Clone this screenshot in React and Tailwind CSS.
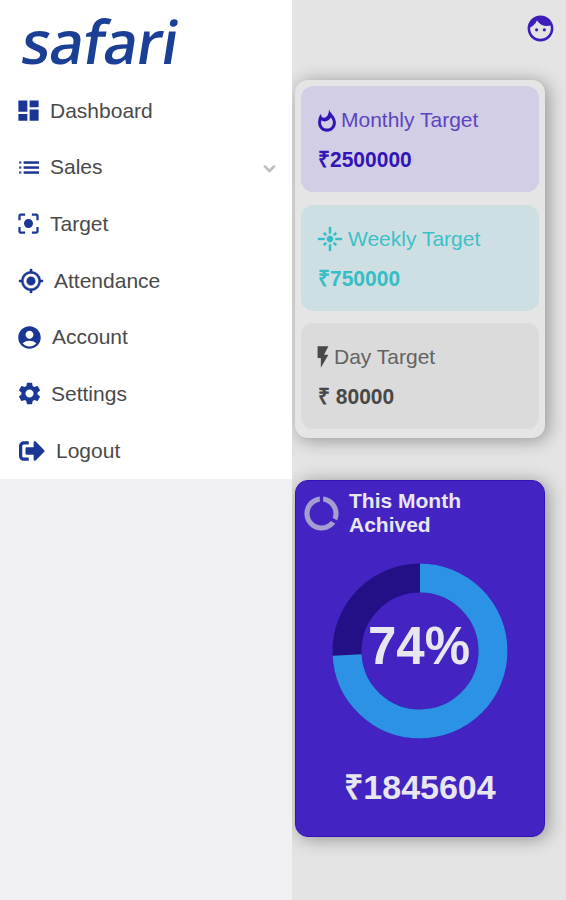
import React from "react";
import {
  MdDashboard,
  MdCenterFocusStrong,
  MdMyLocation,
  MdAccountCircle,
  MdSettings,
  MdFace,
  MdFlare,
  MdFlashOn,
  MdDataUsage,
  MdKeyboardArrowDown,
} from "react-icons/md";
import { FaSignOutAlt } from "react-icons/fa";

function ListIcon({ className }) {
  return (
    <svg viewBox="0 0 20 13" className={className} fill="currentColor">
      <rect x="0" y="0.3" width="2.4" height="2.4" opacity="0.8" />
      <rect x="0" y="5.3" width="2.4" height="2.4" opacity="0.8" />
      <rect x="0" y="10.3" width="2.4" height="2.4" opacity="0.8" />
      <rect x="4.6" y="0.3" width="15.4" height="2.5" />
      <rect x="4.6" y="5.3" width="15.4" height="2.5" />
      <rect x="4.6" y="10.3" width="15.4" height="2.5" />
    </svg>
  );
}

function FlameIcon({ className }) {
  return (
    <svg viewBox="0 0 18 23" className={className}>
      <path
        fill="currentColor"
        fillRule="evenodd"
        d="M11 0.3C11.6 3.8 17.9 7.4 17.9 13.8C17.9 18.8 14 22.7 9 22.7S0.1 18.8 0.1 13.8C0.1 10.6 1 7.2 2.9 4.8C3.1 7.2 3.9 8.8 6 8.8C9.2 8.8 11 5.2 11 0.3ZM12.9 8.6C11.6 11 9.2 12.6 6.4 12.4C5.1 12.3 4.1 11.9 3.4 11.2C3.2 12 3.1 12.8 3.1 13.7C3.1 17.1 5.7 19.6 9 19.6S14.9 17.1 14.9 13.7C14.9 12 14.1 10.1 12.9 8.6Z"
      />
    </svg>
  );
}

const menu = [
  { label: "Dashboard", Icon: MdDashboard, icon: "size-[27px]", cell: "w-[50px] pl-[15px]" },
  { label: "Sales", Icon: ListIcon, icon: "w-[20px] h-[13px]", cell: "w-[50px] pl-[19px]", expandable: true },
  { label: "Target", Icon: MdCenterFocusStrong, icon: "size-[27px]", cell: "w-[50px] pl-[15px]" },
  { label: "Attendance", Icon: MdMyLocation, icon: "size-[26px] stroke-current stroke-[0.4] [&>path[fill=none]]:stroke-none", cell: "w-[54px] pl-[18px]" },
  { label: "Account", Icon: MdAccountCircle, icon: "size-[27px]", cell: "w-[52px] pl-[16px]" },
  { label: "Settings", Icon: MdSettings, icon: "size-[27px]", cell: "w-[51px] pl-[16px]" },
  { label: "Logout", Icon: FaSignOutAlt, icon: "size-[26px]", cell: "w-[56px] pl-[19px]" },
];

const targets = [
  { label: "Monthly Target", amount: "₹2500000", Icon: FlameIcon, icon: "w-[18px] h-[23px] mr-[5px]", box: "bg-[#d2cee6]", title: "text-[#5b45c0]", strong: "text-[#3315b5]" },
  { label: "Weekly Target", amount: "₹750000", Icon: MdFlare, icon: "size-[26px] -ml-px mr-[5px] stroke-current stroke-[0.3] [&>path[fill=none]]:stroke-none", box: "bg-[#cddfe3]", title: "text-[#3dc0c8]", strong: "text-[#36bdc5]" },
  { label: "Day Target", amount: "₹ 80000", Icon: MdFlashOn, icon: "size-[26px] -ml-[8px] -mr-[2px]", box: "bg-[#dbdbdb]", title: "text-[#636363]", strong: "text-[#484848]" },
];

function Sidebar() {
  return (
    <aside className="relative z-10 w-[292px] shrink-0 bg-[#efeff4]">
      <div className="h-[479px] bg-white">
        <div className="flex h-[82px] items-start pl-[19px]">
          <span className="block origin-[0_64px] scale-x-[0.99] -skew-x-[9deg] font-['Open_Sans',sans-serif] text-[60px] leading-[82px] font-semibold tracking-[-1px] text-[#1c3f96]">
            safari
          </span>
        </div>
        <nav className="flex h-[397px] flex-col">
          {menu.map(({ label, Icon, icon, cell, expandable }) => (
            <a key={label} className="flex flex-1 items-center text-[21px] text-[#4a4a4a]">
              <span className={`flex shrink-0 text-[#1b3795] ${cell}`}>
                <Icon className={icon} />
              </span>
              <span>{label}</span>
              {expandable && (
                <MdKeyboardArrowDown className="mt-[3px] mr-[11px] ml-auto size-[23px] stroke-current stroke-1 text-[#c0c0c0] [&>path[fill=none]]:stroke-none" />
              )}
            </a>
          ))}
        </nav>
      </div>
    </aside>
  );
}

function TargetCard({ label, amount, Icon, icon, box, title, strong }) {
  return (
    <div className={`h-[106px] rounded-[12px] pt-[14px] pl-[17px] ${box}`}>
      <div className={`flex h-[40px] items-center text-[21px] ${title}`}>
        <Icon className={`shrink-0 ${icon} ${strong}`} />
        <span>{label}</span>
      </div>
      <div className={`flex h-[40px] scale-y-105 items-center text-[21px] font-bold ${strong}`}>{amount}</div>
    </div>
  );
}

function Donut({ percent }) {
  const length = 2 * Math.PI * 73;
  return (
    <div className="-ml-px grid size-[176px] place-items-center">
      <svg viewBox="0 0 176 176" className="col-start-1 row-start-1 size-[176px] -rotate-90">
        <circle cx="88" cy="88" r="73" fill="none" stroke="#231086" strokeWidth="29" />
        <circle cx="88" cy="88" r="73" fill="none" stroke="#2c92e6" strokeWidth="29" strokeDasharray={`${(length * percent) / 100} ${length}`} />
      </svg>
      <span className="z-10 col-start-1 row-start-1 -mt-[11px] -ml-px scale-y-105 text-[51px] leading-none font-bold">{percent}%</span>
    </div>
  );
}

export default function App() {
  return (
    <div className="flex h-[900px] w-[566px] overflow-hidden bg-[#e4e4e4] font-['Liberation_Sans',Arial,sans-serif]">
      <Sidebar />
      <main className="flex flex-1 flex-col pl-[3px]">
        <header className="flex h-[80px] justify-end pt-[13px] pr-[10px]">
          <MdFace className="size-[31px] text-[#3d1cba]" />
        </header>
        <section className="flex h-[358px] w-[250px] flex-col gap-[12.5px] rounded-[13px] bg-[#e5e5e5] p-[6px] shadow-[3px_2px_18px_rgba(0,0,0,0.36)]">
          {targets.map((t) => (
            <TargetCard key={t.label} {...t} />
          ))}
        </section>
        <section className="mt-[42px] flex h-[357px] w-[250px] flex-col items-center rounded-[13px] border border-[#3712b8] bg-[#4324c2] text-[#e8e6ee] shadow-[3px_2px_18px_rgba(0,0,0,0.36)]">
          <div className="flex h-[82px] w-full items-start pl-[5px]">
            <MdDataUsage className="mt-[12px] size-[41px] text-[#a49fd0]" />
            <h2 className="mt-[8px] ml-[7px] w-[130px] text-[21px] leading-[24px] font-bold">This Month Achived</h2>
          </div>
          <Donut percent={74} />
          <p className="mt-[28px] text-[34px] leading-[40px] font-bold">₹1845604</p>
        </section>
      </main>
    </div>
  );
}
